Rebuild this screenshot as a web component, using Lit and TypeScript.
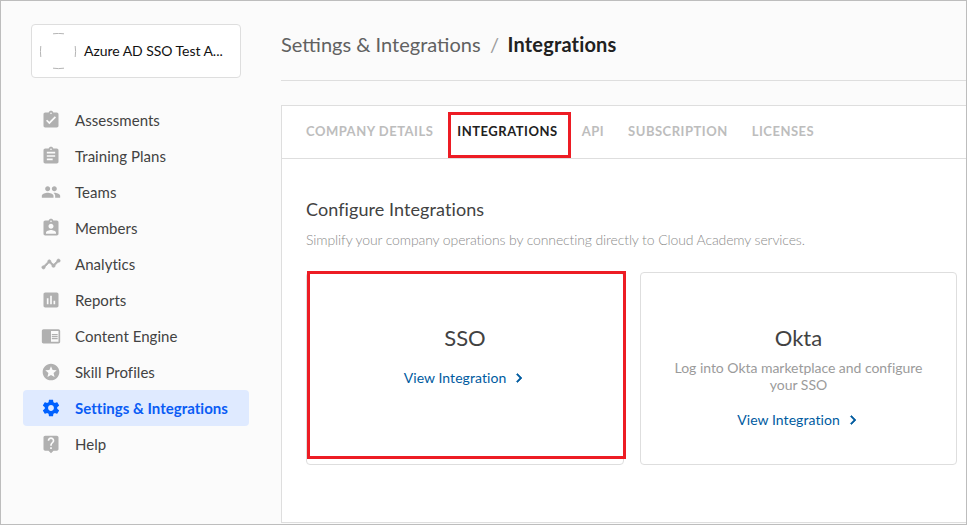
import { LitElement, html, css, svg } from "lit";
import { customElement, property } from "lit/decorators.js";
import { classMap } from "lit/directives/class-map.js";

const ICONS: Record<string, string> = {
  assessments:
    "M19 3h-4.180C14.400 1.840 13.300 1 12 1c-1.300 0-2.400.84-2.820 2H5c-1.100 0-2 .9-2 2v14c0 1.100.9 2 2 2h14c1.100 0 2-.9 2-2V5c0-1.100-.9-2-2-2zm-7 0c.55 0 1 .45 1 1s-.45 1-1 1-1-.45-1-1 .45-1 1-1zm-2 14l-4-4 1.410-1.410L10 14.170l6.590-6.590L18 9l-8 8z",
  plans:
    "M19 3h-4.180C14.400 1.840 13.300 1 12 1c-1.300 0-2.400.84-2.820 2H5c-1.100 0-2 .9-2 2v14c0 1.100.9 2 2 2h14c1.100 0 2-.9 2-2V5c0-1.100-.9-2-2-2zm-7 0c.55 0 1 .45 1 1s-.45 1-1 1-1-.45-1-1 .45-1 1-1zm2 14H7v-2h7v2zm3-4H7v-2h10v2zm0-4H7V7h10v2z",
  teams:
    "M16 11c1.660 0 2.990-1.340 2.990-3S17.660 5 16 5c-1.660 0-3 1.340-3 3s1.340 3 3 3zm-8 0c1.660 0 2.990-1.340 2.990-3S9.660 5 8 5C6.340 5 5 6.340 5 8s1.340 3 3 3zm0 2c-2.330 0-7 1.170-7 3.500V19h14v-2.500c0-2.330-4.670-3.500-7-3.500zm8 0c-.29 0-.62.02-.97.05 1.160.84 1.970 1.970 1.970 3.450V19h6v-2.500c0-2.330-4.670-3.500-7-3.500z",
  members:
    "M19 3h-4.180C14.400 1.840 13.300 1 12 1c-1.300 0-2.400.84-2.820 2H5c-1.100 0-2 .9-2 2v14c0 1.100.9 2 2 2h14c1.100 0 2-.9 2-2V5c0-1.100-.9-2-2-2zm-7 0c.55 0 1 .45 1 1s-.45 1-1 1-1-.45-1-1 .45-1 1-1zm0 4c1.660 0 3 1.340 3 3s-1.340 3-3 3-3-1.340-3-3 1.340-3 3-3zm6 12H6v-1.400c0-2 4-3.100 6-3.100s6 1.100 6 3.100V19z",
  analytics:
    "M23 8c0 1.100-.9 2-2 2-.18 0-.35-.02-.51-.07l-3.560 3.550c.05.16.07.34.07.52 0 1.100-.9 2-2 2s-2-.9-2-2c0-.18.02-.36.07-.52l-2.550-2.550c-.16.05-.34.07-.52.07s-.36-.02-.52-.07l-4.550 4.560c.05.16.07.33.07.51 0 1.100-.9 2-2 2s-2-.9-2-2 .9-2 2-2c.18 0 .35.02.51.07l4.560-4.550C8.020 9.360 8 9.180 8 9c0-1.100.9-2 2-2s2 .9 2 2c0 .18-.02.36-.07.52l2.550 2.550c.16-.05.34-.07.52-.07s.36.02.52.07l3.550-3.560C19.020 8.350 19 8.180 19 8c0-1.100.9-2 2-2s2 .9 2 2z",
  reports:
    "M19 3H5c-1.100 0-2 .9-2 2v14c0 1.100.9 2 2 2h14c1.100 0 2-.9 2-2V5c0-1.100-.9-2-2-2zM9 17H7v-7h2v7zm4 0h-2V7h2v10zm4 0h-2v-4h2v4z",
  content:
    "M13 12h7v1.500h-7zm0-2.500h7V11h-7zm0 5h7V16h-7zM21 4H3c-1.100 0-2 .9-2 2v13c0 1.100.9 2 2 2h18c1.100 0 2-.9 2-2V6c0-1.100-.9-2-2-2zm0 15h-9V6h9v13z",
  skills:
    "M11.990 2C6.470 2 2 6.480 2 12s4.470 10 9.990 10C17.520 22 22 17.520 22 12S17.520 2 11.990 2zm4.240 16L12 15.450 7.770 18l1.120-4.810-3.730-3.230 4.920-.42L12 5l1.920 4.530 4.920.42-3.730 3.230L16.230 18z",
  settings:
    "M19.430 12.980c.04-.32.07-.64.07-.98s-.03-.66-.07-.98l2.110-1.650c.19-.15.24-.42.12-.64l-2-3.460c-.12-.22-.39-.3-.61-.22l-2.490 1c-.52-.4-1.080-.73-1.690-.98l-.38-2.650C14.460 2.180 14.250 2 14 2h-4c-.25 0-.46.18-.49.42l-.38 2.650c-.61.25-1.170.59-1.690.98l-2.490-1c-.23-.09-.49 0-.61.22l-2 3.460c-.13.22-.07.49.12.64l2.110 1.650c-.04.32-.07.65-.07.98s.03.66.07.98l-2.110 1.650c-.19.15-.24.42-.12.64l2 3.460c.12.22.39.3.61.22l2.490-1c.52.4 1.080.73 1.690.98l.38 2.650c.03.24.24.42.49.42h4c.25 0 .46-.18.49-.42l.38-2.650c.61-.25 1.170-.59 1.690-.98l2.490 1c.23.09.49 0 .61-.22l2-3.460c.12-.22.07-.49-.12-.64l-2.110-1.650zM12 15.500c-1.930 0-3.500-1.570-3.500-3.500s1.570-3.500 3.500-3.500 3.500 1.570 3.500 3.500-1.570 3.500-3.500 3.500z",
  help:
    "M19 2H5c-1.110 0-2 .9-2 2v14c0 1.100.89 2 2 2h4l3 3 3-3h4c1.100 0 2-.9 2-2V4c0-1.100-.9-2-2-2zm-6 16h-2v-2h2v2zm2.070-7.750l-.9.92C13.450 11.900 13 12.500 13 14h-2v-.5c0-1.100.45-2.100 1.170-2.830l1.240-1.260c.37-.36.59-.86.59-1.410 0-1.100-.9-2-2-2s-2 .9-2 2H8c0-2.210 1.790-4 4-4s4 1.790 4 4c0 .88-.36 1.680-.93 2.250z",
  chevron: "M10 6L8.590 7.410 13.170 12l-4.580 4.590L10 18l6-6z",
};

@customElement("ui-icon")
class UiIcon extends LitElement {
  @property() name = "";
  static styles = css`
    :host { display: block; width: 20px; height: 20px; flex: none; }
    .glyph { display: block; width: 100%; height: 100%; fill: currentColor; }
    .bold { stroke: currentColor; stroke-width: 0.8; }
  `;
  render() {
    const bold = this.name === "chevron" || this.name === "analytics";
    return html`<svg class=${classMap({ glyph: true, bold })} viewBox="0 0 24 24">${svg`<path d=${ICONS[this.name]}></path>`}</svg>`;
  }
}

@customElement("side-nav")
class SideNav extends LitElement {
  items = [
    ["assessments", "Assessments"],
    ["plans", "Training Plans"],
    ["teams", "Teams"],
    ["members", "Members"],
    ["analytics", "Analytics"],
    ["reports", "Reports"],
    ["content", "Content Engine"],
    ["skills", "Skill Profiles"],
    ["settings", "Settings & Integrations"],
    ["help", "Help"],
  ];
  static styles = css`
    :host { display: block; width: 226px; padding: 23px 0 0 22px; flex: none; }
    .account {
      display: flex; align-items: center; gap: 7px; box-sizing: border-box;
      width: 210px; height: 54px; margin-left: 8px; padding-left: 8px;
      border: 1px solid #dedede; border-radius: 4px; background: #fff;
      font-size: 14px; color: #111; white-space: nowrap;
    }
    .account span { padding-bottom: 2px; letter-spacing: -0.05px; }
    .avatar { width: 37px; height: 37px; flex: none; }
    .avatar path { fill: none; stroke: #b5b5b5; stroke-width: 1; }
    .items { margin-top: 24px; }
    .item {
      display: flex; align-items: center; gap: 14px; height: 36px;
      padding-left: 18px; border-radius: 4px; font-size: 15px; letter-spacing: 0.04px; color: #424242;
    }
    .item ui-icon { color: #b0b0b0; }
    .active { background: #dfeaff; color: #0a5cf5; font-weight: 700; letter-spacing: 0.02px; }
    .active ui-icon { color: #0061ff; }
  `;
  render() {
    return html`
      <div class="account">
        <svg class="avatar" viewBox="0 0 37 37">
          <path d="M13 .8Q18.500 0 24 .8M13 35.200Q18.500 36 24 35.200M.8 13Q0 18.500 .8 24M35.200 13Q36 18.500 35.200 24"></path>
        </svg>
        <span>Azure AD SSO Test A...</span>
      </div>
      <div class="items">
        ${this.items.map(
          ([icon, label]) => html`<div class=${classMap({ item: true, active: icon === "settings" })}>
            <ui-icon name=${icon}></ui-icon><span>${label}</span>
          </div>`
        )}
      </div>
    `;
  }
}

@customElement("integration-card")
class IntegrationCard extends LitElement {
  @property() heading = "";
  @property() text = "";
  @property({ type: Boolean }) marked = false;
  static styles = css`
    :host {
      display: block; position: relative; box-sizing: border-box; height: 193px;
      border: 1px solid #dedede; border-radius: 4px; padding: 49px 30px 0;
      text-align: center; background: #fff;
    }
    .title { font-size: 22px; line-height: 32px; color: #424242; }
    .text { margin: 5px 0 17px; font-size: 14px; line-height: 17px; letter-spacing: -0.03px; color: #9b9b9b; }
    .link {
      display: flex; align-items: center; justify-content: center; gap: 4px;
      margin-top: 14px; padding-left: 2px; font-size: 14px; line-height: 20px; letter-spacing: 0.06px; color: #005b9f;
    }
    .link ui-icon { width: 18px; height: 18px; }
    .mark { position: absolute; inset: -2px -3px 5px 0; border: 3px solid #ed1c24; }
  `;
  render() {
    return html`
      <div class="title">${this.heading}</div>
      ${this.text ? html`<div class="text">${this.text}</div>` : ""}
      <div class="link"><span>View Integration</span><ui-icon name="chevron"></ui-icon></div>
      ${this.marked ? html`<div class="mark"></div>` : ""}
    `;
  }
}

@customElement("app-root")
class AppRoot extends LitElement {
  tabs = ["Company details", "Integrations", "API", "Subscription", "Licenses"];
  static styles = css`
    :host {
      display: flex; box-sizing: border-box; width: 967px; height: 525px; overflow: hidden;
      border: 1px solid #bdbdbd; background: #fbfbfb;
      font-family: Lato, "Liberation Sans", sans-serif; color: #424242;
    }
    .main { flex: 1; min-width: 0; margin-left: 32px; }
    .crumbs {
      display: flex; align-items: center; box-sizing: border-box; height: 80px; padding-top: 7px;
      border-bottom: 1px solid #dedede; font-size: 20px; color: #616161; white-space: pre;
    }
    .slash { margin: 0 8.500px 0 9.500px; color: #9b9b9b; }
    .current { font-weight: 700; letter-spacing: 0.16px; color: #212121; }
    .panel {
      box-sizing: border-box; height: 418px; margin-top: 24px; background: #fff;
      border: 1px solid #dedede; border-right: 0;
    }
    .tabs {
      display: flex; gap: 24px; box-sizing: border-box; height: 53px; padding-left: 24px;
      border-bottom: 1px solid #dedede; font-size: 13px; line-height: 50px; font-weight: 700;
      letter-spacing: 0.51px; color: #bdbdbd; text-transform: uppercase; white-space: nowrap;
    }
    .tab { position: relative; }
    .chosen { color: #212121; }
    .mark { position: absolute; inset: 6px -13px 0 -9.500px; border: 3px solid #ed1c24; }
    .body { padding: 38px 9px 0 24px; }
    .title { font-size: 18px; line-height: 24px; letter-spacing: 0.08px; }
    .lead { margin-top: 9px; font-size: 14px; line-height: 20px; font-weight: 300; letter-spacing: -0.12px; color: #8c8c8c; }
    .cards { display: grid; grid-template-columns: 318px 317px; gap: 16px; margin-top: 22px; }
  `;
  render() {
    return html`
      <side-nav></side-nav>
      <div class="main">
        <div class="crumbs"><span>Settings &amp; Integrations</span><span class="slash">/</span><span class="current">Integrations</span></div>
        <div class="panel">
          <div class="tabs">
            ${this.tabs.map((t) =>
              t === "Integrations"
                ? html`<span class="tab chosen">${t}<span class="mark"></span></span>`
                : html`<span class="tab">${t}</span>`
            )}
          </div>
          <div class="body">
            <div class="title">Configure Integrations</div>
            <div class="lead">Simplify your company operations by connecting directly to Cloud Academy services.</div>
            <div class="cards">
              <integration-card heading="SSO" marked></integration-card>
              <integration-card heading="Okta" text="Log into Okta marketplace and configure your SSO"></integration-card>
            </div>
          </div>
        </div>
      </div>
    `;
  }
}
